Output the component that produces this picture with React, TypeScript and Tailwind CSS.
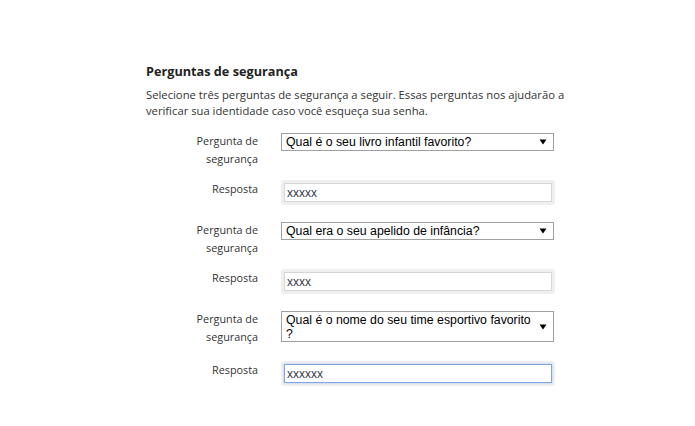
import React from "react";

function Triangle() {
  return (
    <svg width="8" height="6" viewBox="0 0 8 6" className="shrink-0">
      <path d="M0.5 0.5 L7.5 0.5 L4 5.5 Z" fill="#000" />
    </svg>
  );
}

function SelectBox({ children, tall }: { children: React.ReactNode; tall?: boolean }) {
  return (
    <div
      className={`mt-[1px] flex w-[273px] items-center justify-between border border-[#a0a0a0] bg-white pl-[4px] pr-[6px] text-[12.3px] text-black ${
        tall ? "h-[31px] leading-[14px]" : "h-[18px] leading-[16px]"
      }`}
      style={{ fontFamily: '"Liberation Sans", Arial, sans-serif' }}
    >
      <span>{children}</span>
      <Triangle />
    </div>
  );
}

function AnswerBox({ value, focused }: { value: string; focused?: boolean }) {
  return (
    <div className="w-[274px] rounded-[3px] bg-[#efefef] p-[3px]">
      <input
        readOnly
        value={value}
        className={`block h-[19px] w-full bg-white px-[2px] text-[12px] text-[#3a3a4a] outline-none ${
          focused
            ? "border border-[#7fa6e2] shadow-[0_0_2px_#a9c6f0]"
            : "border border-[#d6d6d6]"
        }`}
        style={{ fontFamily: '"Liberation Sans", Arial, sans-serif' }}
      />
    </div>
  );
}

function QuestionRow({ children, tall, className }: { children: React.ReactNode; tall?: boolean; className?: string }) {
  return (
    <div className={`flex items-start ${className ?? ""}`}>
      <div className="w-[112px] shrink-0 text-right text-[10.8px] leading-[18px]">
        Pergunta de
        <br />
        segurança
      </div>
      <div className="ml-[23px]">
        <SelectBox tall={tall}>{children}</SelectBox>
      </div>
    </div>
  );
}

function AnswerRow({ value, focused, className }: { value: string; focused?: boolean; className?: string }) {
  return (
    <div className={`flex items-start ${className ?? ""}`}>
      <div className="w-[112px] shrink-0 text-right text-[10.8px] leading-[18px]">Resposta</div>
      <div className="ml-[23px]">
        <AnswerBox value={value} focused={focused} />
      </div>
    </div>
  );
}

export default function App() {
  return (
    <div className="min-h-screen w-full bg-white">
      <div
        className="ml-[146px] w-[440px] pt-[62px] text-[11.25px] text-[#333]"
        style={{ fontFamily: '"Open Sans", sans-serif' }}
      >
        <h2 className="text-[12.7px] font-bold leading-[18px] text-[#222]">Perguntas de segurança</h2>
        <p className="mt-[7px] whitespace-nowrap leading-[16px]">
          Selecione três perguntas de segurança a seguir. Essas perguntas nos ajudarão a
          <br />
          verificar sua identidade caso você esqueça sua senha.
        </p>
        <div className="mt-[13px]">
          <QuestionRow>Qual é o seu livro infantil favorito?</QuestionRow>
          <AnswerRow className="mt-[12px]" value="xxxxx" />
          <QuestionRow className="mt-[16px]">Qual era o seu apelido de infância?</QuestionRow>
          <AnswerRow className="mt-[12px]" value="xxxx" />
          <QuestionRow className="mt-[16px]" tall>
            Qual é o nome do seu time esportivo favorito
            <br />?
          </QuestionRow>
          <AnswerRow className="mt-[15px]" value="xxxxxx" focused />
        </div>
      </div>
    </div>
  );
}
